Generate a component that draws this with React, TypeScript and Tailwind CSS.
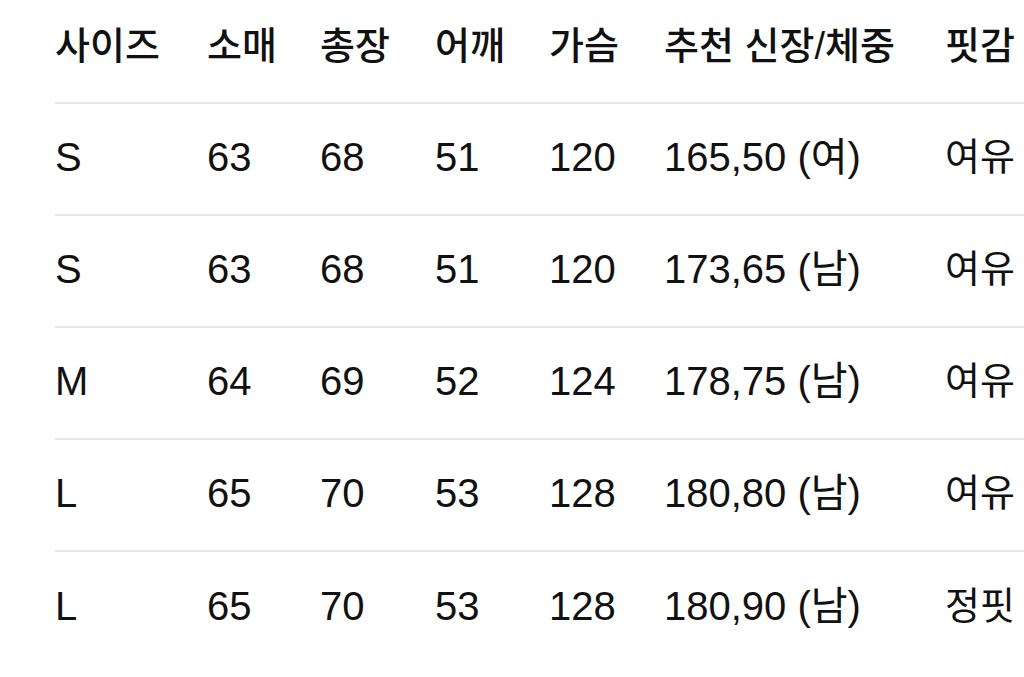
import React from "react";

const header = ["사이즈", "소매", "총장", "어깨", "가슴", "추천 신장/체중", "핏감"];
const rows = [
  ["S", "63", "68", "51", "120", "165,50 (여)", "여유"],
  ["S", "63", "68", "51", "120", "173,65 (남)", "여유"],
  ["M", "64", "69", "52", "124", "178,75 (남)", "여유"],
  ["L", "65", "70", "53", "128", "180,80 (남)", "여유"],
  ["L", "65", "70", "53", "128", "180,90 (남)", "정핏"],
];

const cols = "grid grid-cols-[152px_113px_115px_114px_115px_281px_1fr]";

export default function App() {
  return (
    <div
      className="w-[1024px] h-[677px] overflow-hidden bg-white pl-[55px] text-[#111111]"
      style={{ fontFamily: '"Liberation Sans", "Noto Sans CJK KR", sans-serif' }}
    >
      <div className={`${cols} h-[104px] items-center border-b-2 border-[#e6e6e6] pb-[10px] text-[38px] font-medium whitespace-nowrap`}>
        {header.map((h, i) => (
          <div key={i}>{h}</div>
        ))}
      </div>
      {rows.map((r, ri) => (
        <div
          key={ri}
          className={`${cols} h-[112px] items-center pb-[4px] whitespace-nowrap text-[40px] ${ri < rows.length - 1 ? "border-b-2 border-[#e6e6e6]" : ""}`}
        >
          {r.map((c, ci) => (
            <div key={ci} className={ci === 6 ? "text-[38px]" : ""}>{c}</div>
          ))}
        </div>
      ))}
    </div>
  );
}
